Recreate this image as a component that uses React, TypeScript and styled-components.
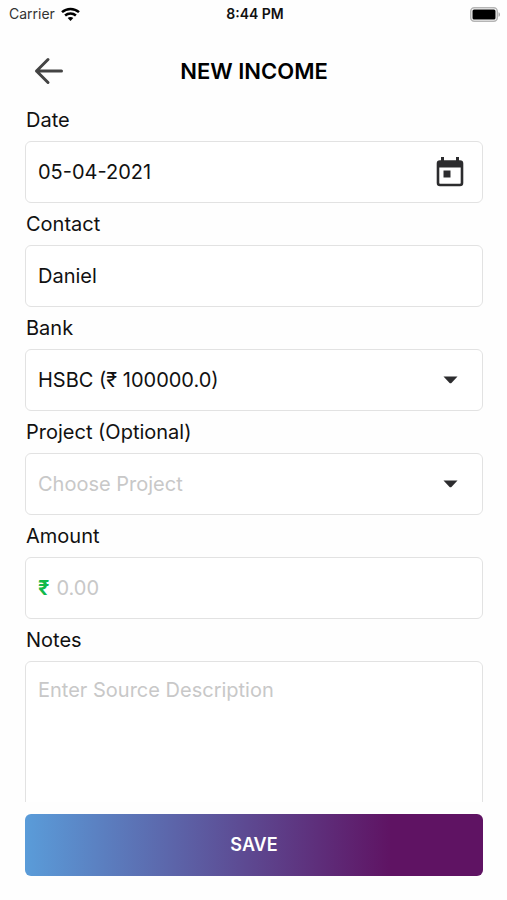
import React, { useState } from "react";
import styled, { createGlobalStyle, css } from "styled-components";

const GlobalStyle = createGlobalStyle`
  *, *::before, *::after { box-sizing: border-box; }
  body {
    margin: 0;
    background: #fefefe;
    color: #111;
    font-family: Inter, "Liberation Sans", sans-serif;
  }
`;

const Screen = styled.div`
  display: flex;
  flex-direction: column;
  height: 100vh;
`;

const StatusBar = styled.div`
  display: grid;
  grid-template-columns: 1fr auto 1fr;
  align-items: center;
  height: 28px;
  padding: 0 6px 0 9px;
  font-size: 14px;
  line-height: 20px;
  color: #333;
`;

const Carrier = styled.div`
  display: flex;
  align-items: center;
  gap: 6px;
`;

const Clock = styled.time`
  font-size: 14px;
  font-weight: 600;
  color: #111;
`;

const BatteryIcon = styled.svg`
  justify-self: end;
`;

const Header = styled.header`
  display: grid;
  grid-template-columns: 48px 1fr 48px;
  align-items: center;
  height: 80px;
  padding: 6px 24px 0 25px;
`;

const BackButton = styled.button`
  display: flex;
  align-items: center;
  justify-content: center;
  height: 48px;
  padding: 0;
  border: 0;
  background: none;
  color: #444;
  cursor: pointer;
`;

const Title = styled.h1`
  margin: 0;
  font-size: 22px;
  line-height: 28px;
  font-weight: 600;
  text-align: center;
  color: #000;
`;

const Form = styled.form`
  display: flex;
  flex: 1;
  flex-direction: column;
  min-height: 0;
  padding: 0 24px 24px 25px;
`;

const Fields = styled.div`
  display: flex;
  flex: 1;
  flex-direction: column;
  gap: 9px;
  min-height: 0;
  overflow-y: auto;
  scrollbar-width: none;
`;

const Field = styled.div`
  display: flex;
  flex: none;
  flex-direction: column;
  gap: 9px;
`;

const Label = styled.label`
  padding-left: 1px;
  font-size: 20px;
  line-height: 24px;
`;

const frame = css`
  border: 1px solid #e2e2e2;
  border-radius: 6px;
  background: #fff;
`;

const Box = styled.div`
  ${frame}
  display: grid;
  grid-template-columns: auto 1fr auto;
  align-items: center;
  height: 62px;
`;

const controlText = css`
  font-family: inherit;
  font-size: 20px;
  line-height: 24px;
  color: #111;
  outline: none;
  &::placeholder {
    color: #c8c8c8;
    opacity: 1;
  }
`;

const Input = styled.input`
  ${controlText}
  grid-column: 2;
  width: 100%;
  min-width: 0;
  height: 60px;
  padding: 0 12px;
  border: 0;
  background: none;
`;

const AmountInput = styled(Input)`
  padding-left: 7px;
`;

const Select = styled.select<{ $empty: boolean }>`
  ${controlText}
  grid-row: 1;
  grid-column: 1 / -1;
  width: 100%;
  height: 60px;
  padding: 0 48px 0 12px;
  border: 0;
  background: none;
  appearance: none;
  color: ${(p) => (p.$empty ? "#c8c8c8" : "#111")};
`;

const Caret = styled.svg`
  grid-row: 1;
  grid-column: 3;
  margin-right: 24px;
  pointer-events: none;
`;

const Currency = styled.span`
  padding-left: 12px;
  font-size: 20px;
  line-height: 24px;
  font-weight: 700;
  color: #12b94b;
`;

const IconButton = styled.button`
  display: flex;
  grid-column: 3;
  margin-right: 17px;
  padding: 0;
  border: 0;
  background: none;
  color: #2c2c2e;
  cursor: pointer;
`;

const Notes = styled.textarea`
  ${frame}
  ${controlText}
  display: block;
  width: 100%;
  height: 180px;
  padding: 16px 12px;
  resize: none;
`;

const SaveButton = styled.button`
  flex: none;
  height: 62px;
  margin-top: 12px;
  border: 0;
  border-radius: 6px;
  background: linear-gradient(90deg, #5a9cd9 0%, #5f1363 80%);
  color: #fff;
  font-family: inherit;
  font-size: 18px;
  line-height: 24px;
  font-weight: 600;
  cursor: pointer;
`;

function WifiIcon() {
  return (
    <svg width="19" height="14" viewBox="0 0 19 14" fill="none" stroke="#000" strokeWidth="2.5" aria-hidden="true">
      <path d="M1 5.2C5.8.8 13.2.8 18 5.2" />
      <path d="M4.1 8.5c3.1-2.8 7.7-2.8 10.8 0" />
      <path d="M9.5 14 6.7 11.1c1.6-1.5 4-1.5 5.6 0z" fill="#000" stroke="none" />
    </svg>
  );
}

function Battery() {
  return (
    <BatteryIcon width="31" height="15" viewBox="0 0 31 15" role="img" aria-label="Battery full">
      <rect x="0.75" y="0.75" width="26.5" height="13.5" rx="3.5" fill="#fff" stroke="#b5b5b5" strokeWidth="1.5" />
      <rect x="2.5" y="2.5" width="23" height="10" rx="1.5" fill="#000" />
      <path d="M28.5 5.2c2 .7 2 3.9 0 4.6z" fill="#aaa" />
    </BatteryIcon>
  );
}

function ArrowLeft() {
  return (
    <svg
      width="30"
      height="28"
      viewBox="0 0 30 28"
      fill="none"
      stroke="currentColor"
      strokeWidth="3"
      strokeLinecap="round"
      strokeLinejoin="round"
      aria-hidden="true"
    >
      <path d="M27.5 14H2.5M14 2.5 2.5 14 14 25.5" />
    </svg>
  );
}

function CalendarIcon() {
  return (
    <svg width="30" height="30" viewBox="0 0 30 30" fill="none" aria-hidden="true">
      <rect x="3" y="4.5" width="24" height="23.5" rx="2" stroke="currentColor" strokeWidth="2.6" />
      <path d="M3 4.500h24v6H3z" fill="currentColor" />
      <path d="M7.500 0v5M22.500 0v5" stroke="currentColor" strokeWidth="3" />
      <path d="M8.500 13.500h7v7h-7z" fill="currentColor" />
    </svg>
  );
}

function CaretDown() {
  return (
    <Caret width="15" height="8" viewBox="0 0 15 8" aria-hidden="true">
      <path d="M.5.5h14l-5.800 6.300q-1.200 1-2.400 0z" fill="#2c2c2e" />
    </Caret>
  );
}

export default function App() {
  const [date, setDate] = useState("05-04-2021");
  const [contact, setContact] = useState("Daniel");
  const [bank, setBank] = useState("hsbc");
  const [project, setProject] = useState("");

  return (
    <Screen>
      <GlobalStyle />
      <StatusBar>
        <Carrier>
          Carrier
          <WifiIcon />
        </Carrier>
        <Clock>8:44 PM</Clock>
        <Battery />
      </StatusBar>
      <Header>
        <BackButton type="button" aria-label="Back">
          <ArrowLeft />
        </BackButton>
        <Title>NEW INCOME</Title>
      </Header>
      <Form onSubmit={(e) => e.preventDefault()}>
        <Fields>
          <Field>
            <Label htmlFor="date">Date</Label>
            <Box>
              <Input id="date" value={date} onChange={(e) => setDate(e.target.value)} />
              <IconButton type="button" aria-label="Pick a date">
                <CalendarIcon />
              </IconButton>
            </Box>
          </Field>
          <Field>
            <Label htmlFor="contact">Contact</Label>
            <Box>
              <Input id="contact" value={contact} onChange={(e) => setContact(e.target.value)} />
            </Box>
          </Field>
          <Field>
            <Label htmlFor="bank">Bank</Label>
            <Box>
              <Select id="bank" $empty={false} value={bank} onChange={(e) => setBank(e.target.value)}>
                <option value="hsbc">HSBC (₹ 100000.0)</option>
              </Select>
              <CaretDown />
            </Box>
          </Field>
          <Field>
            <Label htmlFor="project">Project (Optional)</Label>
            <Box>
              <Select
                id="project"
                $empty={project === ""}
                value={project}
                onChange={(e) => setProject(e.target.value)}
              >
                <option value="">Choose Project</option>
              </Select>
              <CaretDown />
            </Box>
          </Field>
          <Field>
            <Label htmlFor="amount">Amount</Label>
            <Box>
              <Currency>₹</Currency>
              <AmountInput id="amount" inputMode="decimal" placeholder="0.00" />
            </Box>
          </Field>
          <Field>
            <Label htmlFor="notes">Notes</Label>
            <Notes id="notes" placeholder="Enter Source Description" />
          </Field>
        </Fields>
        <SaveButton type="submit">SAVE</SaveButton>
      </Form>
    </Screen>
  );
}
